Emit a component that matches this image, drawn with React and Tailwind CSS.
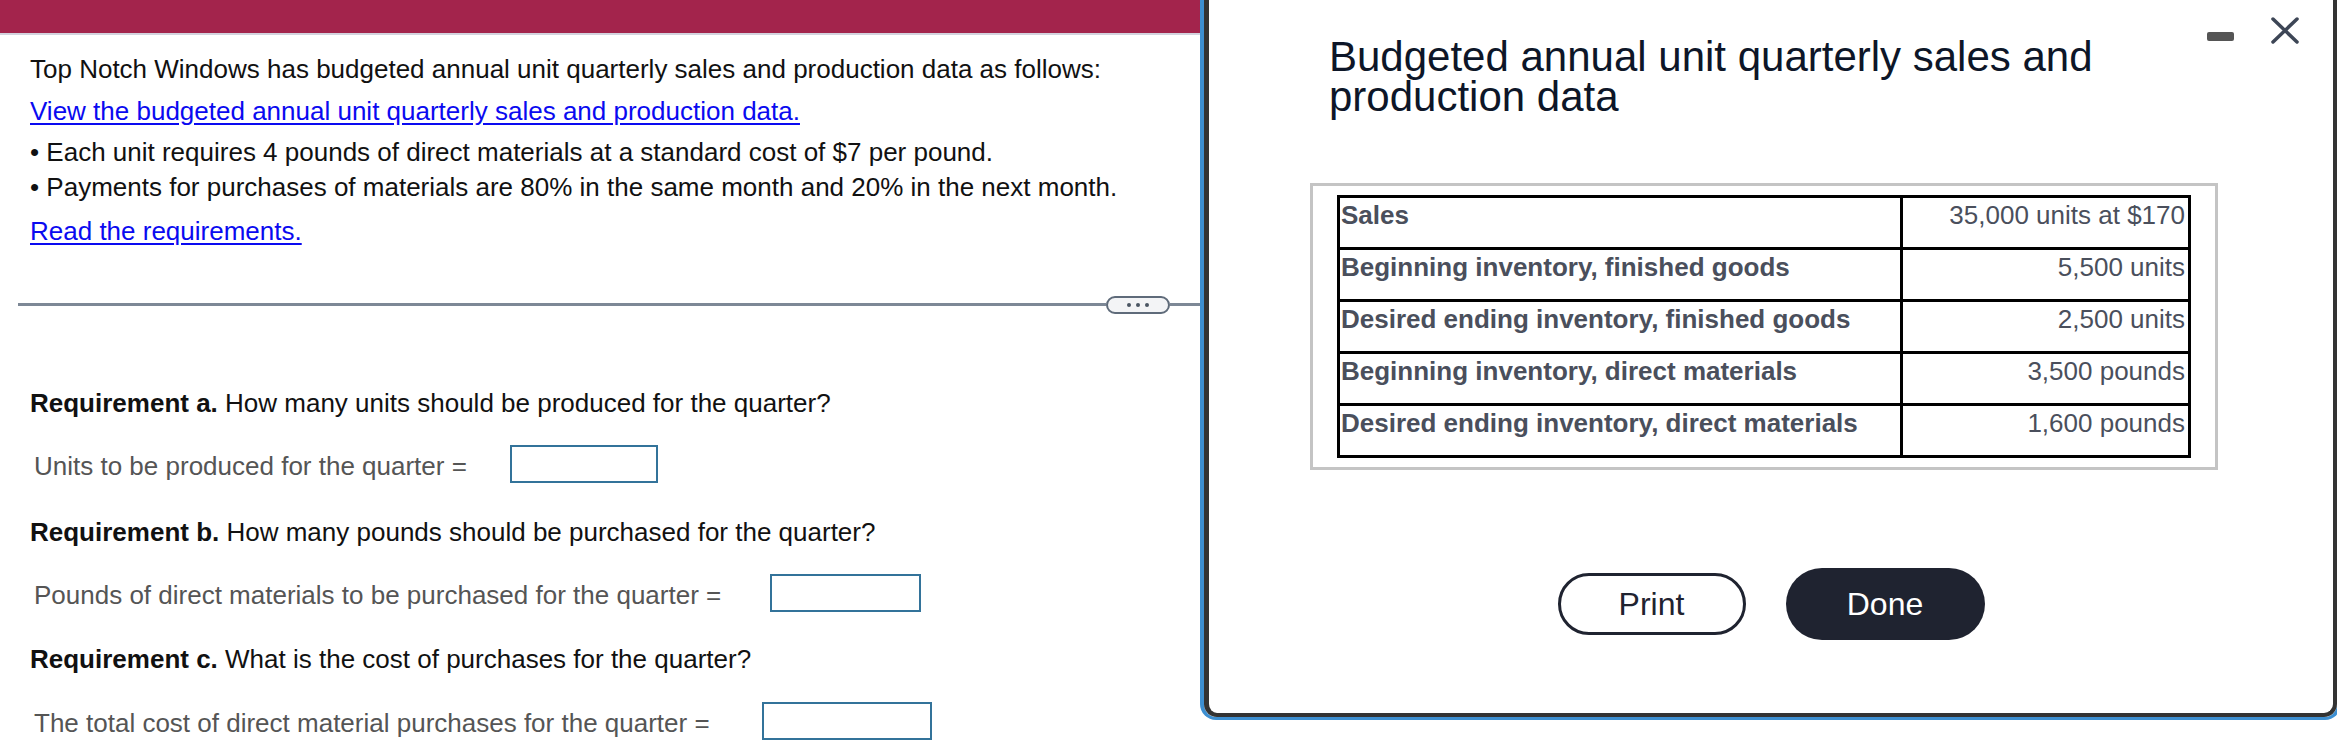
import React from 'react'

const rows = [
  ['Sales', '35,000 units at $170'],
  ['Beginning inventory, finished goods', '5,500 units'],
  ['Desired ending inventory, finished goods', '2,500 units'],
  ['Beginning inventory, direct materials', '3,500 pounds'],
  ['Desired ending inventory, direct materials', '1,600 pounds'],
]

function AnswerRow({ label, gap, width }) {
  return (
    <div className="flex items-center h-[38px] pl-[4px]">
      <span className="text-[#555] pt-[4px]">{label}</span>
      <div className={`${gap} ${width} h-[38px] border-2 border-[#33739a] bg-white`} />
    </div>
  )
}

export default function App() {
  return (
    <div className="w-[2337px] h-[750px] overflow-hidden flex bg-white font-['Liberation_Sans',Arial,Helvetica,sans-serif]">
      {/* question panel */}
      <div className="w-[1200px] shrink-0 flex flex-col">
        <div className="h-[33px] bg-[#a3244c]" />
        <div className="h-[2px] bg-[#d3d3de]" />
        <div className="pl-[30px] text-[26px] leading-[35px] text-[#111]">
          <p className="mt-[17px]">Top Notch Windows has budgeted annual unit quarterly sales and production data as follows:</p>
          <p className="mt-[7px]">
            <a className="text-[#0a0af0] underline underline-offset-[3px]">View the budgeted annual unit quarterly sales and production data.</a>
          </p>
          <p className="mt-[6px]">• Each unit requires 4 pounds of direct materials at a standard cost of $7 per pound.</p>
          <p>• Payments for purchases of materials are 80% in the same month and 20% in the next month.</p>
          <p className="mt-[9px]">
            <a className="text-[#0a0af0] underline underline-offset-[3px]">Read the requirements.</a>
          </p>
        </div>

        <div className="mt-[47px] flex items-center h-[17px] pl-[18px]">
          <div className="flex-1 h-[3px] bg-[#7d8896]" />
          <div className="w-[64px] h-[18px] rounded-full border-2 border-[#5f6b7a] bg-[#f3f4f6] flex items-center justify-center gap-[5px]">
            <span className="w-[4px] h-[4px] rounded-full bg-[#4b5563]" />
            <span className="w-[4px] h-[4px] rounded-full bg-[#4b5563]" />
            <span className="w-[4px] h-[4px] rounded-full bg-[#4b5563]" />
          </div>
          <div className="w-[30px] h-[3px] bg-[#7d8896]" />
        </div>

        <div className="pl-[30px] text-[26px] leading-[35px] text-[#111]">
          <p className="mt-[73px]"><b>Requirement a.</b> How many units should be produced for the quarter?</p>
          <div className="mt-[24px]">
            <AnswerRow label="Units to be produced for the quarter =" gap="ml-[43px]" width="w-[148px]" />
          </div>
          <p className="mt-[32px]"><b>Requirement b.</b> How many pounds should be purchased for the quarter?</p>
          <div className="mt-[24px]">
            <AnswerRow label="Pounds of direct materials to be purchased for the quarter =" gap="ml-[49px]" width="w-[151px]" />
          </div>
          <p className="mt-[30px]"><b>Requirement c.</b> What is the cost of purchases for the quarter?</p>
          <div className="mt-[25px]">
            <AnswerRow label="The total cost of direct material purchases for the quarter =" gap="ml-[52px]" width="w-[170px]" />
          </div>
        </div>
      </div>

      {/* data dialog */}
      <div className="w-[1141px] shrink-0 h-[720px] border-x-[4px] border-b-[3px] border-[#3d8fd1] rounded-b-[16px]">
        <div className="relative h-full bg-white border-l-[5px] border-r-[4px] border-b-[4px] border-[#333] rounded-b-[13px]">
          <div className="absolute top-[17px] right-[34px] flex items-start gap-[37px]">
            <div className="mt-[15px] w-[27px] h-[9px] rounded-[2px] bg-[#555]" />
            <svg width="28" height="27" viewBox="0 0 28 27" fill="none" stroke="#3d4656" strokeWidth="3.5" strokeLinecap="round">
              <path d="M2 2 L26 25 M26 2 L2 25" />
            </svg>
          </div>

          <h2 className="pt-[37px] pl-[120px] text-[42px] leading-[40px] text-[#0d1628] font-normal">
            Budgeted annual unit quarterly sales and
            <br />
            production data
          </h2>

          <div className="mt-[66px] ml-[101px] w-[908px] border-[3px] border-[#c4c4c4] px-[24px] py-[9px]">
            <table className="w-full border-collapse border-[3px] border-black text-[26px] leading-[30px] text-[#4a4f5c]">
              <tbody>
                {rows.map(([label, value]) => (
                  <tr key={label} className="h-[52px]">
                    <td className="w-[563px] border-[3px] border-black align-top pl-[1px] pt-[2px] font-bold">{label}</td>
                    <td className="border-[3px] border-black align-top text-right pr-[3px] pt-[2px]">{value}</td>
                  </tr>
                ))}
              </tbody>
            </table>
          </div>

          <div className="mt-[98px] flex items-center justify-center gap-[40px]">
            <button className="w-[188px] h-[62px] rounded-full border-[3px] border-[#1f2330] bg-white text-[32px] text-[#1f2330]">Print</button>
            <button className="w-[199px] h-[72px] rounded-full bg-[#1f2330] text-[32px] text-white">Done</button>
          </div>
        </div>
      </div>
    </div>
  )
}
